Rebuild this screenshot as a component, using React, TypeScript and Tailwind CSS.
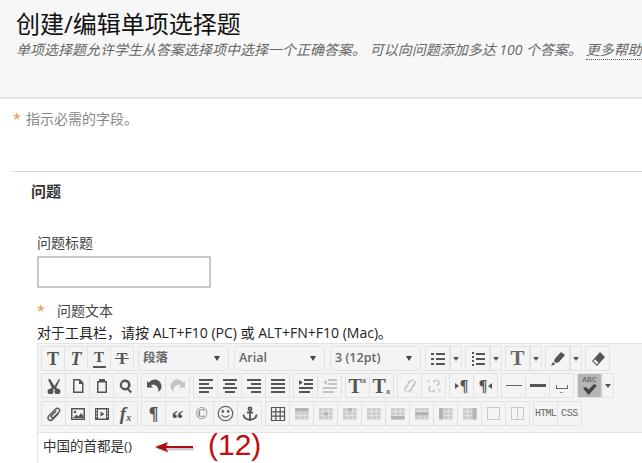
import React from "react";

const cjk = "font-['Open_Sans','Noto_Sans_CJK_SC',sans-serif]";

function Svg({ children, dim }: { children: React.ReactNode; dim?: boolean }) {
  return (
    <svg
      viewBox="0 0 16 16"
      className={`h-4 w-4 ${dim ? "text-[#c4c4c4]" : "text-[#555]"}`}
      fill="currentColor"
    >
      {children}
    </svg>
  );
}

function Letter({ children, className }: { children: React.ReactNode; className: string }) {
  return <span className={`leading-none font-['Liberation_Serif',serif] ${className}`}>{children}</span>;
}

const Lines = ({ rows }: { rows: [number, number, number][] }) => (
  <Svg>
    {rows.map(([x, y, w], i) => (
      <rect key={i} x={x} y={y} width={w} height={2} />
    ))}
  </Svg>
);

const Grid = ({ fill }: { fill?: [number, number, number, number] }) => (
  <svg viewBox="0 0 16 16" className="h-4 w-4 text-[#cdcdcd]" fill="currentColor">
    {[1, 5.7, 10.4].map((x) =>
      [2, 6, 10].map((y) => <rect key={`${x}${y}`} x={x} y={y} width={4.2} height={3.5} />)
    )}
    {fill && <rect x={fill[0]} y={fill[1]} width={fill[2]} height={fill[3]} fill="#b4b4b4" />}
  </svg>
);

const icons: Record<string, React.ReactNode> = {
  bold: <Letter className="text-[18px] font-bold text-[#555]">T</Letter>,
  italic: <Letter className="text-[18px] font-bold italic text-[#555]">T</Letter>,
  under: (
    <span className="flex flex-col items-center">
      <Letter className="text-[15px] font-bold text-[#555]">T</Letter>
      <span className="mt-px h-[2px] w-[13px] bg-[#555]" />
    </span>
  ),
  strike: (
    <span className="relative flex items-center justify-center">
      <Letter className="text-[16px] font-bold text-[#555]">T</Letter>
      <span className="absolute h-[1.5px] w-[14px] bg-[#555]" />
    </span>
  ),
  cut: (
    <Svg>
      <path d="M4 1l4.5 7L13 1l1 .6-3.7 8 .6 1a3 3 0 1 1-2 1.4L8 10.5l-.9 1.5a3 3 0 1 1-2-1.4l.6-1L2 1.600z" />
    </Svg>
  ),
  copy: (
    <Svg>
      <path fillRule="evenodd" d="M3 1h7l3.5 3.5V15H3zm1.5 1.500v11H12V6H9V2.500z" />
    </Svg>
  ),
  paste: (
    <Svg>
      <path fillRule="evenodd" d="M5 1h6v2h2v12H3V3h2zm-.5 3.500v9h7v-9z" />
    </Svg>
  ),
  find: (
    <Svg>
      <path fillRule="evenodd" d="M7 1.5a5.5 5.5 0 0 1 4 9.300l3 3-1.500 1.500-3.200-3.200A5.500 5.500 0 1 1 7 1.500zM7 4a3 3 0 1 0 0 6 3 3 0 0 0 0-6z" />
    </Svg>
  ),
  undo: (
    <Svg>
      <path d="M1 3l1.800 1.800A6.500 6.500 0 0 1 14.500 12L12 14c1.500-4-2-8.500-7-6.800L7 9.500H1z" />
    </Svg>
  ),
  redo: (
    <Svg dim>
      <path d="M15 3l-1.800 1.800A6.500 6.500 0 0 0 1.500 12L4 14c-1.500-4 2-8.500 7-6.800L9 9.500h6z" />
    </Svg>
  ),
  left: <Lines rows={[[1, 1, 14], [1, 5, 10], [1, 9, 14], [1, 13, 10]]} />,
  center: <Lines rows={[[1, 1, 14], [3, 5, 10], [1, 9, 14], [3, 13, 10]]} />,
  right: <Lines rows={[[1, 1, 14], [5, 5, 10], [1, 9, 14], [5, 13, 10]]} />,
  justify: <Lines rows={[[1, 1, 14], [1, 5, 14], [1, 9, 14], [1, 13, 14]]} />,
  indent: (
    <Svg>
      <path d="M1 2l4 2.500L1 7z" />
      <rect x="6" y="1" width="9" height="2" />
      <rect x="6" y="5" width="9" height="2" />
      <rect x="1" y="9" width="14" height="2" />
      <rect x="1" y="13" width="11" height="2" />
    </Svg>
  ),
  outdent: (
    <Svg dim>
      <path d="M5 2L1 4.500 5 7z" />
      <rect x="6" y="1" width="9" height="2" />
      <rect x="6" y="5" width="9" height="2" />
      <rect x="1" y="9" width="14" height="2" />
      <rect x="1" y="13" width="11" height="2" />
    </Svg>
  ),
  sup: (
    <span className="flex items-start">
      <Letter className="text-[20px] font-bold text-[#555]">T</Letter>
      <Letter className="text-[9px] font-bold italic text-[#555]">x</Letter>
    </span>
  ),
  sub: (
    <span className="flex items-end">
      <Letter className="text-[20px] font-bold text-[#555]">T</Letter>
      <Letter className="text-[9px] font-bold italic text-[#555]">x</Letter>
    </span>
  ),
  link: (
    <Svg dim>
      <path d="M10 1.500a3.500 3.500 0 0 1 3.500 5l-3 3.500-1.500-1.300 3-3.500a1.700 1.700 0 0 0-2.500-2.300L6.500 6.400 5 5.100 8 2a3 3 0 0 1 2-.5zM6 14.500a3.500 3.500 0 0 1-3.500-5l3-3.500L7 7.300l-3 3.500a1.700 1.700 0 0 0 2.500 2.300l3-3.500 1.500 1.300-3 3.100a3 3 0 0 1-2 .5z" />
    </Svg>
  ),
  unlink: (
    <Svg dim>
      <path d="M10 1.500a3.500 3.500 0 0 1 3.500 5L12 8.200l-1.400-1.200 1.300-1.500a1.700 1.700 0 0 0-2.500-2.300L8 4.700 6.700 3.500 8 2a3 3 0 0 1 2-.5zM6 14.500a3.500 3.500 0 0 1-3.500-5L4 7.800 5.400 9l-1.300 1.500a1.700 1.700 0 0 0 2.500 2.300L8 11.300l1.300 1.200L8 14a3 3 0 0 1-2 .5zM1 3l1-1 2 2-1 1zM12 12l1-1 2 2-1 1z" />
    </Svg>
  ),
  ltr: (
    <span className="flex items-center gap-px">
      <span className="h-0 w-0 border-y-[3px] border-l-[4px] border-y-transparent border-l-[#555]" />
      <Letter className="text-[16px] font-bold text-[#555]">¶</Letter>
    </span>
  ),
  rtl: (
    <span className="flex items-center gap-px">
      <Letter className="text-[16px] font-bold text-[#555]">¶</Letter>
      <span className="h-0 w-0 border-y-[3px] border-r-[4px] border-y-transparent border-r-[#555]" />
    </span>
  ),
  hr: <span className="h-[1.5px] w-[16px] bg-[#666]" />,
  hrBold: <span className="h-[3px] w-[16px] bg-[#555]" />,
  nbsp: (
    <span className="mt-[6px] flex flex-col items-center gap-[3px]">
      <span className="h-[4px] w-[12px] border-x border-b border-[#666]" />
      <span className="h-px w-[3px] bg-[#999]" />
    </span>
  ),
  spell: (
    <span className="flex h-[23px] w-[23px] flex-col items-center justify-center bg-[#b5b5b5]">
      <span className="font-['Liberation_Mono',monospace] text-[8px] leading-[8px] text-[#555]">ABC</span>
      <svg viewBox="0 0 16 12" className="h-[11px] w-[15px]" fill="#444">
        <path d="M1 5l3-2 3 3 6-6 3 2-9 10z" />
      </svg>
    </span>
  ),
  attach: (
    <Svg>
      <path d="M13.500 2.500a3 3 0 0 0-4.300 0L2.300 9.400a3.300 3.300 0 0 0 4.700 4.700l6-6-1-1-6 6a1.900 1.900 0 0 1-2.700-2.700l6.900-6.900a1.600 1.600 0 0 1 2.300 2.300L7 11a.6.6 0 0 1-.9-.9l4.700-4.700-1-1-4.700 4.700a2 2 0 0 0 2.900 2.900l5.200-5.200a3 3 0 0 0 .3-4.300z" />
    </Svg>
  ),
  image: (
    <Svg>
      <path fillRule="evenodd" d="M1 2h14v12H1zm1.500 1.500v9h11v-9z" />
      <circle cx="5" cy="6" r="1.300" />
      <path d="M3 12l3.500-3.500 2 2L11 7l2.500 3v2z" />
    </Svg>
  ),
  media: (
    <Svg>
      <path fillRule="evenodd" d="M1 2h14v12H1zm3 1.500v9h8v-9zM2 3.500V5h1V3.500zM2 6.500V8h1V6.500zM2 9.500V11h1V9.500zM13 3.500V5h1V3.500zM13 6.500V8h1V6.500zM13 9.500V11h1V9.500z" />
      <path d="M6.500 5.500L10.500 8l-4 2.500z" />
    </Svg>
  ),
  fx: (
    <span className="flex items-end">
      <Letter className="text-[19px] font-bold italic text-[#555]">f</Letter>
      <Letter className="text-[10px] font-bold italic text-[#555]">x</Letter>
    </span>
  ),
  para: <Letter className="text-[18px] font-bold text-[#555]">¶</Letter>,
  quote: <Letter className="mt-[9px] text-[24px] font-bold text-[#555]">“</Letter>,
  copyr: <Letter className="text-[16px] text-[#666]">©</Letter>,
  smile: (
    <svg viewBox="0 0 16 16" className="h-[17px] w-[17px]" fill="none" stroke="#666" strokeWidth="1.200">
      <circle cx="8" cy="8" r="6.800" />
      <circle cx="5.500" cy="6" r=".8" fill="#666" />
      <circle cx="10.500" cy="6" r=".8" fill="#666" />
      <path d="M4.500 9.500c1 2.500 6 2.500 7 0" />
    </svg>
  ),
  anchor: (
    <svg viewBox="0 0 16 16" className="h-[16px] w-[16px]" fill="none" stroke="#555" strokeWidth="1.800">
      <circle cx="8" cy="2.800" r="1.500" />
      <path d="M8 4.500V14M5 6.500h6M1.500 8.500c0 3.500 3 5 6.500 5.500 3.500-.5 6.500-2 6.500-5.500" />
    </svg>
  ),
  table: (
    <svg viewBox="0 0 16 16" className="h-4 w-4" fill="none" stroke="#555" strokeWidth="1.200">
      <path d="M1.500 1.500h13v13h-13zM1.500 5.800h13M1.500 10.200h13M5.800 1.500v13M10.200 1.500v13" />
    </svg>
  ),
  t1: <Grid fill={[1, 2, 13.6, 3.5]} />,
  t2: <Grid fill={[5.7, 6, 4.2, 3.5]} />,
  t3: <Grid fill={[5.7, 2, 4.2, 3.5]} />,
  t4: <Grid />,
  t5: <Grid fill={[1, 10, 13.6, 3.5]} />,
  t6: <Grid fill={[1, 6, 13.6, 3.5]} />,
  t7: <Grid fill={[1, 2, 4.2, 11.5]} />,
  t8: <Grid fill={[10.4, 2, 4.2, 11.5]} />,
  box: <span className="h-[13px] w-[13px] border border-[#c8c8c8]" />,
  split: (
    <span className="flex h-[13px] w-[13px] border border-[#c8c8c8]">
      <span className="h-full w-1/2 border-r border-[#c8c8c8]" />
    </span>
  ),
  html: <span className="font-['Liberation_Mono',monospace] text-[10px] leading-none tracking-[-0.7px] text-[#666]">HTML</span>,
  css: <span className="font-['Liberation_Mono',monospace] text-[10px] leading-none tracking-[-0.4px] text-[#666]">CSS</span>,
  bullets: <Lines rows={[[1, 2, 3], [6, 2, 9], [1, 7, 3], [6, 7, 9], [1, 12, 3], [6, 12, 9]]} />,
  numbers: <Lines rows={[[2, 1, 2], [6, 2, 9], [2, 5, 2], [6, 7, 9], [2, 9, 2], [2, 13, 2], [6, 12, 9]]} />,
  textColor: <Letter className="text-[21px] font-bold text-[#666]">T</Letter>,
  pen: (
    <Svg>
      <path d="M11 1l4 3-6 7-2.500 1L4 10.500l1-3zM3 11l2.500 2L1 15z" />
    </Svg>
  ),
  eraser: (
    <Svg>
      <path fillRule="evenodd" d="M10 1l5 5-8 9-5-5zM3.500 10L7 13.500l1.500-1.700L5 8.300z" />
    </Svg>
  ),
};

function Btn({ icon, narrow }: { icon: string; narrow?: boolean }) {
  return (
    <span
      className={`flex h-[23px] items-center justify-center border-r border-[#e2e2e2] last:border-r-0 ${
        narrow ? "w-[23px] last:w-[22px]" : "w-[24px] last:w-[23px]"
      }`}
    >
      {icons[icon]}
    </span>
  );
}

function Caret() {
  return (
    <span className="flex h-[23px] w-[10px] items-center justify-center">
      <span className="h-0 w-0 border-x-[3px] border-t-[4px] border-x-transparent border-t-[#555]" />
    </span>
  );
}

function Group({
  items,
  caret,
  narrow,
  className = "",
}: {
  items: string[];
  caret?: boolean;
  narrow?: boolean;
  className?: string;
}) {
  return (
    <span className={`flex shrink-0 border border-[#e2e2e2] ${className}`}>
      {items.map((name, i) => (
        <Btn key={i} icon={name} narrow={narrow} />
      ))}
      {caret && (
        <span className="border-l border-[#e2e2e2]">
          <Caret />
        </span>
      )}
    </span>
  );
}

function Select({ label, className }: { label: string; className: string }) {
  return (
    <span
      className={`flex h-[25px] w-[91px] shrink-0 items-center justify-between rounded-[4px] border border-[#e2e2e2] pl-[4px] pr-[8px] text-[12.5px] font-semibold text-[#666] ${className}`}
    >
      {label}
      <span className="h-0 w-0 border-x-[3.5px] border-t-[5px] border-x-transparent border-t-[#444]" />
    </span>
  );
}

export default function App() {
  return (
    <div className={`h-[463px] w-[642px] overflow-hidden bg-white ${cjk}`}>
      <div className="h-[99px] overflow-hidden whitespace-nowrap border-b-2 border-[#e5e5e5] bg-[#f7f7f7] pl-[16px] pt-[8px]">
        <h1 className="text-[24px] font-normal leading-[32px] text-[#111]">创建/编辑单项选择题</h1>
        <p className="text-[14px] italic leading-[20px] text-[#666]">
          单项选择题允许学生从答案选择项中选择一个正确答案。 可以向问题添加多达 100 个答案。{" "}
          <span className="border-b border-dotted border-[#555]">更多帮助</span>
        </p>
      </div>

      <p className="ml-[13px] mt-[11px] text-[14px] leading-[18px] text-[#888]">
        <span className="inline-block w-[13px] text-[#f08a3c]">*</span>指示必需的字段。
      </p>

      <div className="ml-[13px] mt-[43px] border-t border-[#d8d8d8] pt-[9px]">
        <h2 className="ml-[18px] text-[15px] font-bold leading-[20px] text-[#333]">问题</h2>

        <div className="ml-[24px] mt-[32px]">
          <label className="block text-[14px] leading-[20px] text-[#444]">问题标题</label>
          <div className="mt-[3px] h-[32px] w-[174px] border-2 border-[#c8c8c8] bg-white" />

          <div className="mt-[13px] flex text-[14px] leading-[20px] text-[#444]">
            <span className="w-[20px] text-[#f08a3c]">*</span>问题文本
          </div>
          <p className="mt-[2px] whitespace-nowrap text-[14px] leading-[20px] text-[#222]">
            对于工具栏，请按 ALT+F10 (PC) 或 ALT+FN+F10 (Mac)。
          </p>

          <div className="w-[640px] border-l border-[#e2e2e2]">
            <div className="h-[90px] border-y border-[#e2e2e2] bg-[#f4f4f4] pl-[3px] pt-[2px]">
              <div className="flex items-center gap-[3px]">
                <Group narrow items={["bold", "italic", "under", "strike"]} />
                <Select label="段落" className="ml-px" />
                <Select label="Arial" className="ml-[2px]" />
                <Select label="3 (12pt)" className="ml-[2px]" />
                <Group items={["bullets"]} caret className="ml-px" />
                <Group items={["numbers"]} caret />
                <Group items={["textColor"]} caret />
                <Group items={["pen"]} caret />
                <Group items={["eraser"]} />
              </div>
              <div className="mt-[2px] flex items-center gap-[3px]">
                <Group items={["cut", "copy", "paste", "find"]} />
                <Group items={["undo", "redo"]} />
                <Group items={["left", "center", "right", "justify"]} />
                <Group items={["indent", "outdent"]} />
                <Group items={["sup", "sub"]} />
                <Group items={["link", "unlink"]} />
                <Group items={["ltr", "rtl"]} />
                <Group items={["hr", "hrBold", "nbsp"]} />
                <Group items={["spell"]} caret />
              </div>
              <div className="mt-[3px] flex items-center gap-[3px]">
                <Group items={["attach", "image", "media", "fx"]} />
                <Group items={["para", "quote", "copyr", "smile", "anchor"]} />
                <Group items={["table", "t1", "t2", "t3", "t4", "t5", "t6", "t7", "t8", "box", "split"]} />
                <Group items={["html", "css"]} />
              </div>
            </div>
            <div className="relative h-[40px] pl-[5px] pt-[3px] text-[13.5px] leading-[20px] text-[#333]">
              中国的首都是()
              <svg viewBox="0 0 40 12" className="absolute left-[117px] top-[8px] h-[12px] w-[40px]">
                <path d="M0 6l13-5-2 4h27v3H11l2 3z" fill="#000" opacity=".2" transform="translate(1 1.5)" />
                <path d="M0 6l13-5-2 4h27v2H11l2 4z" fill="#b00d12" />
              </svg>
              <span className="absolute left-[170px] top-[-4px] font-['Liberation_Sans',sans-serif] text-[30px] leading-[32px] text-[#c00d12]">
                (12)
              </span>
            </div>
          </div>
        </div>
      </div>
    </div>
  );
}
